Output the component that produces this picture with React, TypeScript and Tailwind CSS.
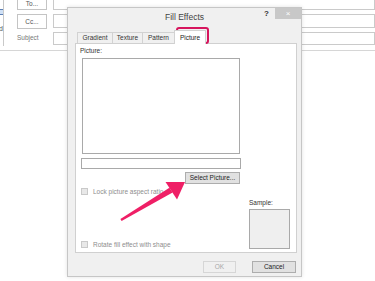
import React from "react";

export default function App() {
  return (
    <div className="relative w-[375px] h-[281px] overflow-hidden bg-white font-['Liberation_Sans',Arial,sans-serif] text-[#333]">
      {/* Background compose header */}
      <div className="flex h-[51px] border-b border-[#d6d6d6]">
        <div className="w-[4px] h-[46px] border-r border-[#c9c9c9] flex flex-col items-end pt-[9px]">
          <div className="w-[4px] h-[6px] shrink-0 border border-r-0 border-[#5b7fb5] bg-[#cfe0f5]" />
          <div className="mt-[10px] text-[7px] leading-[8px] text-[#555] whitespace-nowrap shrink-0">d</div>
        </div>
        <div className="ml-[13px] w-[30px] flex flex-col">
          <div className="h-[12px] mt-[-2px] border border-[#c4c4c4] flex items-center justify-center text-[6.5px] text-[#555]">To...</div>
          <div className="h-[15px] mt-[4px] border border-[#c4c4c4] flex items-center justify-center text-[6.5px] text-[#555]">Cc...</div>
          <div className="mt-[5px] text-[6.5px] leading-[8px] text-[#777]">Subject</div>
        </div>
        <div className="ml-[6px] flex-1 flex flex-col">
          <div className="h-[12px] mt-[-2px] border border-[#cacaca]" />
          <div className="h-[14px] mt-[4px] border border-[#cacaca]" />
          <div className="h-[13px] mt-[4px] border border-[#cacaca]" />
        </div>
      </div>

      {/* Dialog */}
      <div className="absolute left-[67px] top-[7px] w-[235px] h-[270px] bg-[#f0f0f0] border border-[#c6c6c6] shadow-[0_0_4px_rgba(0,0,0,0.12)] flex flex-col">
        {/* Title bar */}
        <div className="h-[22px] grid grid-cols-[1fr_auto_1fr] shrink-0">
          <div />
          <div className="pt-[4px] text-[8.5px] leading-[10px] text-[#444]">Fill Effects</div>
          <div className="flex justify-end items-start">
            <div className="mt-[2px] mr-[6px] text-[8px] leading-[8px] font-bold text-[#333]">?</div>
            <div className="w-[26px] h-[11px] bg-[#c8c8c8] flex items-center justify-center text-white text-[8px] leading-[8px]">×</div>
          </div>
        </div>

        {/* Tabs */}
        <div className="h-[13px] flex items-end ml-[9px] shrink-0">
          <div className="w-[36px] h-[11px] border border-b-0 border-[#d2d2d2] bg-[#f0f0f0] flex items-center justify-center text-[6.5px] text-[#333]">Gradient</div>
          <div className="w-[31px] h-[11px] -ml-px border border-b-0 border-[#d2d2d2] bg-[#f0f0f0] flex items-center justify-center text-[6.5px] text-[#333]">Texture</div>
          <div className="w-[33px] h-[11px] -ml-px border border-b-0 border-[#d2d2d2] bg-[#f0f0f0] flex items-center justify-center text-[6.5px] text-[#333]">Pattern</div>
          <div className="relative z-10 w-[32px] h-[14px] -ml-px mb-[-1px] border border-b-0 border-[#d2d2d2] bg-white flex items-center justify-center text-[6.5px] text-[#222]">Picture</div>
        </div>

        {/* Panel */}
        <div className="ml-[7px] mr-[4px] h-[210px] bg-white border border-[#d0d0d0] flex flex-col shrink-0">
          <div className="pl-[4px] pt-[3px] w-[166px] flex flex-col">
            <div className="text-[6.5px] leading-[8px] text-[#333]">Picture:</div>
            <div className="ml-[2px] mt-[3px] w-[158px] h-[96px] border border-[#a9a9a9] bg-white" />
            <div className="ml-[1px] mt-[4px] w-[160px] h-[11px] border border-[#a9a9a9] bg-white" />
            <div className="ml-[105px] mt-[3px] w-[55px] h-[12px] border border-[#adadad] bg-[#e1e1e1] flex items-center justify-center text-[6.5px] text-[#222]">Select Picture...</div>
          </div>
          <div className="flex-1 flex justify-between pl-[5px] pr-[6px]">
            <div className="flex flex-col justify-between pt-[4px] pb-[4px]">
              <div className="flex items-center gap-[5px]">
                <div className="w-[7px] h-[7px] border border-[#c9c9c9] bg-[#e8e8e8]" />
                <div className="text-[6.5px] leading-[7px] text-[#8d8d8d]">Lock picture aspect ratio</div>
              </div>
              <div className="flex items-center gap-[5px]">
                <div className="w-[7px] h-[7px] border border-[#c9c9c9] bg-[#e8e8e8]" />
                <div className="text-[6.5px] leading-[7px] text-[#8d8d8d]">Rotate fill effect with shape</div>
              </div>
            </div>
            <div className="flex flex-col justify-end pb-[3px]">
              <div className="text-[6.5px] leading-[8px] text-[#333]">Sample:</div>
              <div className="mt-[2px] w-[41px] h-[40px] border border-[#a9a9a9] bg-[#efefef]" />
            </div>
          </div>
        </div>

        {/* Buttons */}
        <div className="mt-[8px] flex justify-end gap-[16px] mr-[5px]">
          <div className="w-[33px] h-[12px] border border-[#d6d6d6] bg-[#f0f0f0] flex items-center justify-center text-[6.5px] text-[#a8a8a8]">OK</div>
          <div className="w-[44px] h-[12px] border border-[#adadad] bg-[#e1e1e1] flex items-center justify-center text-[6.5px] text-[#222]">Cancel</div>
        </div>
      </div>

      {/* Highlight around Picture tab */}
      <div className="absolute left-[176px] top-[27px] w-[33px] h-[17px] rounded-[3px] border-2 border-[#d6155d]" />

      {/* Arrow */}
      <svg className="absolute left-0 top-0" width="375" height="281" viewBox="0 0 375 281">
        <polygon points="120.4,219.1 121.6,220.9 172.6,192.6 169.4,187.8" fill="#ef1f66" />
        <polygon points="185,182 165.5,182 177,199.5" fill="#ef1f66" />
      </svg>
    </div>
  );
}
